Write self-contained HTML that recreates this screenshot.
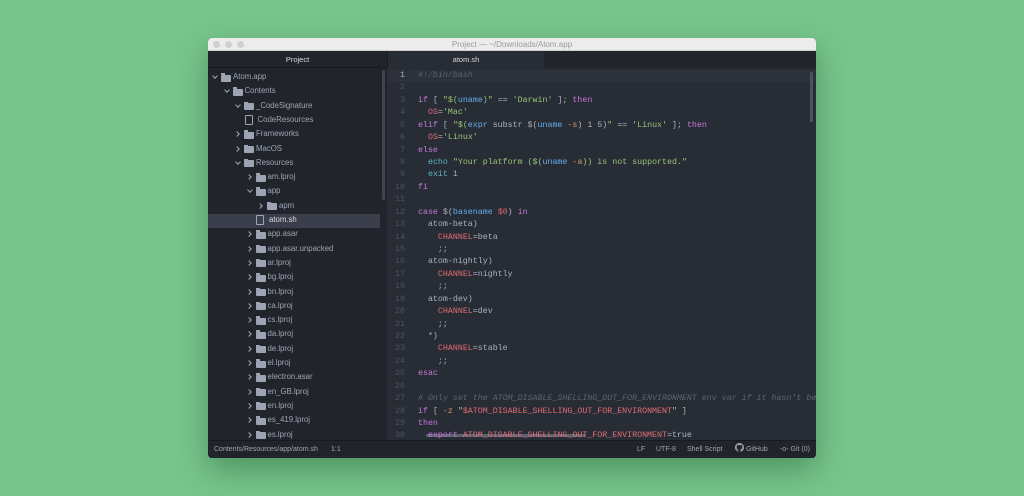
<!DOCTYPE html>
<html><head><meta charset="utf-8"><style>
*{margin:0;padding:0;box-sizing:border-box}
body{width:1024px;height:496px;background:#78c48c;overflow:hidden;font-family:"Liberation Sans",sans-serif;position:relative}
.win{position:absolute;left:208px;top:38px;width:608px;height:420px;background:#282c34;border-radius:4px;overflow:hidden;box-shadow:0 12px 30px rgba(0,60,20,.35)}
.title{position:absolute;left:0;top:0;width:608px;height:13px;background:#ececec;border-bottom:1px solid #cfcfcf;font-size:8px;color:#9a9a9a;text-align:center;line-height:13px}
.dot{position:absolute;top:3px;width:7px;height:7px;border-radius:50%;background:#d0d0d0}
.side{position:absolute;left:0;top:13px;width:179px;height:389px;background:#21252b}
.sidehead{height:17px;font-size:7.5px;color:#d7dae0;text-align:center;line-height:17px;border-bottom:1px solid #181a1f}
.tabs{position:absolute;left:179px;top:13px;width:429px;height:17px;background:#21252b;border-left:1px solid #181a1f}
.tab{position:absolute;left:0;top:0;width:156px;height:17px;background:#282c34;color:#d7dae0;font-size:7.5px;text-align:center;line-height:17px}
.row{position:absolute;height:14px;font-size:7.8px;color:#9da5b4;line-height:14px;white-space:nowrap}
.sel{position:absolute;left:0;width:172px;height:14px;background:#3a3f4b}
.arr{position:absolute;width:4px;height:4px;border-right:1px solid #9da5b4;border-bottom:1px solid #9da5b4}
.fold{position:absolute;width:10px;height:7px;background:#9da5b4;border-radius:1px}
.fold:before{content:"";position:absolute;left:0;top:-1.5px;width:4px;height:2px;background:#9da5b4}
.file{position:absolute;width:8px;height:10px;border:1px solid #9da5b4;border-radius:1px}
.code{position:absolute;left:179px;top:30px;width:429px;height:372px;overflow:hidden;font-family:"Liberation Mono",monospace;font-size:8.3px;color:#abb2bf}
.ln{position:absolute;left:0;width:39px;text-align:right;color:#4b5263;height:12.43px;line-height:12.43px}
.cl{position:absolute;left:31px;white-space:pre;height:12.43px;line-height:12.43px}
.k{color:#c678dd}.s{color:#98c379}.v{color:#e06c75}.f{color:#61afef}.c{color:#5c6370;font-style:italic}.n{color:#d19a66}.b{color:#56b6c2}
.status{position:absolute;left:0;top:402px;width:608px;height:18px;background:#21252b;border-top:1px solid #181a1f;font-size:7px;color:#9da5b4;line-height:17px}
</style></head><body>
<div class="win">
<div class="title"><span class="dot" style="left:5px"></span><span class="dot" style="left:17px"></span><span class="dot" style="left:29px"></span>Project — ~/Downloads/Atom.app</div>
<div class="side"><div class="sidehead">Project</div>
<div style="position:absolute;left:174px;top:19px;width:3px;height:130px;background:#3e4451;border-radius:2px"></div>
</div>
<div class="tabs"><div class="tab">atom.sh</div></div>
<div class="sel" style="top:176px"></div>
<div id="tree"></div>
<div class="code" id="code">
<div style="position:absolute;left:0;top:2px;width:429px;height:12.4px;background:#2c313a"></div>
<div style="position:absolute;left:423px;top:4px;width:3px;height:50px;background:#4b5263;border-radius:2px"></div>
<div style="position:absolute;left:39px;top:366px;width:160px;height:2.5px;background:#5c6370;border-radius:2px"></div>
</div>
<div class="status"><span style="position:absolute;left:6px">Contents/Resources/app/atom.sh</span><span style="position:absolute;left:123px">1:1</span>
<span style="position:absolute;left:429px">LF</span><span style="position:absolute;left:448px">UTF-8</span><span style="position:absolute;left:479px">Shell Script</span>
<span style="position:absolute;left:527px"><svg width="9" height="9" viewBox="0 0 16 16" style="vertical-align:-1px"><path fill="#9da5b4" d="M8 0C3.6 0 0 3.6 0 8c0 3.5 2.3 6.5 5.5 7.6.4.1.5-.2.5-.4v-1.4c-2.2.5-2.7-1-2.7-1-.4-.9-.9-1.200-.9-1.2-.7-.5.1-.5.1-.5.8.1 1.2.8 1.2.8.7 1.2 1.9.9 2.3.7.1-.5.3-.9.5-1.1-1.8-.2-3.6-.9-3.6-4 0-.9.3-1.6.8-2.1-.1-.2-.4-1 .1-2.1 0 0 .7-.2 2.2.8.6-.2 1.3-.3 2-.3s1.4.1 2 .3c1.5-1 2.2-.8 2.2-.8.4 1.1.2 1.9.1 2.1.5.6.8 1.3.8 2.1 0 3.1-1.900 3.7-3.7 3.9.3.3.6.8.6 1.5v2.2c0 .2.1.5.6.4C13.7 14.5 16 11.5 16 8c0-4.4-3.6-8-8-8z"/></svg> GitHub</span>
<span style="position:absolute;left:572px">-o- Git (0)</span></div>
</div>
<script>
var items=[[0,'d','Atom.app'],[1,'d','Contents'],[2,'d','_CodeSignature'],[3,'f','CodeResources'],[2,'d','Frameworks'],[2,'d','MacOS'],[2,'d','Resources'],[3,'d','am.lproj'],[3,'d','app'],[4,'d','apm'],[4,'f','atom.sh'],[3,'d','app.asar'],[3,'d','app.asar.unpacked'],[3,'d','ar.lproj'],[3,'d','bg.lproj'],[3,'d','bn.lproj'],[3,'d','ca.lproj'],[3,'d','cs.lproj'],[3,'d','da.lproj'],[3,'d','de.lproj'],[3,'d','el.lproj'],[3,'d','electron.asar'],[3,'d','en_GB.lproj'],[3,'d','en.lproj'],[3,'d','es_419.lproj'],[3,'d','es.lproj']];
var open={0:1,1:1,2:1,6:1,8:1};var h='';
items.forEach(function(it,i){var y=32+i*14.3;var x=5+it[0]*11.5;var r='';
if(it[1]=='d'){r+= open[i]?'<span class="arr" style="left:'+x+'px;top:4px;transform:rotate(45deg)"></span>':'<span class="arr" style="left:'+(x-1)+'px;top:5px;transform:rotate(-45deg)"></span>';
r+='<span class="fold" style="left:'+(x+8)+'px;top:4.5px"></span><span style="position:absolute;left:'+(x+20)+'px">'+it[2]+'</span>';}
else{r+='<span class="file" style="left:'+(x-3)+'px;top:2px"></span><span style="position:absolute;left:'+(x+10)+'px;'+(i==10?'color:#d7dae0':'')+'">'+it[2]+'</span>';}
h+='<div class="row" style="left:0;top:'+y+'px;width:179px">'+r+'</div>';});
document.getElementById('tree').innerHTML=h;
var L=['<span class="c">#!/bin/bash</span>','',
'<span class="k">if</span> [ <span class="s">"$(</span><span class="f">uname</span><span class="s">)"</span> == <span class="s">\'Darwin\'</span> ]; <span class="k">then</span>',
'  <span class="v">OS</span>=<span class="s">\'Mac\'</span>',
'<span class="k">elif</span> [ <span class="s">"$(</span><span class="f">expr</span> substr $(<span class="f">uname</span> <span class="n">-s</span>) 1 5)<span class="s">"</span> == <span class="s">\'Linux\'</span> ]; <span class="k">then</span>',
'  <span class="v">OS</span>=<span class="s">\'Linux\'</span>',
'<span class="k">else</span>',
'  <span class="b">echo</span> <span class="s">"Your platform ($(</span><span class="f">uname</span> <span class="n">-a</span><span class="s">)) is not supported."</span>',
'  <span class="b">exit</span> 1',
'<span class="k">fi</span>','',
'<span class="k">case</span> $(<span class="f">basename</span> <span class="v">$0</span>) <span class="k">in</span>',
'  atom-beta)','    <span class="v">CHANNEL</span>=beta','    ;;',
'  atom-nightly)','    <span class="v">CHANNEL</span>=nightly','    ;;',
'  atom-dev)','    <span class="v">CHANNEL</span>=dev','    ;;',
'  *)','    <span class="v">CHANNEL</span>=stable','    ;;',
'<span class="k">esac</span>','',
'<span class="c"># Only set the ATOM_DISABLE_SHELLING_OUT_FOR_ENVIRONMENT env var if it hasn\'t been set</span>',
'<span class="k">if</span> [ <span class="n">-z</span> <span class="s">"</span><span class="v">$ATOM_DISABLE_SHELLING_OUT_FOR_ENVIRONMENT</span><span class="s">"</span> ]',
'<span class="k">then</span>',
'  <span class="k">export</span> <span class="v">ATOM_DISABLE_SHELLING_OUT_FOR_ENVIRONMENT</span>=true'];
var c='';L.forEach(function(l,i){var y=i*12.43+2;c+='<div class="ln" style="top:'+y+'px;width:18px;'+(i==0?'color:#abb2bf':'')+'">'+(i+1)+'</div><div class="cl" style="top:'+y+'px">'+l+'</div>';});
document.getElementById('code').insertAdjacentHTML('beforeend',c);
</script>
</body></html>
